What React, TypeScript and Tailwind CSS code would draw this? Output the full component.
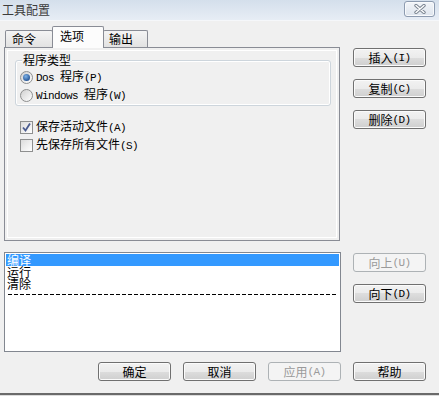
import React from "react";

const CJK = "font-['Noto_Sans_CJK_SC','Noto_Sans_CJK_JP',sans-serif]";

function Txt({ s }: { s: string }) {
  const runs: { a: boolean; t: string }[] = [];
  for (const ch of s) {
    const a = ch.charCodeAt(0) < 128;
    const last = runs[runs.length - 1];
    if (last && last.a === a) last.t += ch;
    else runs.push({ a, t: ch });
  }
  return (
    <>
      {runs.map((r, i) =>
        r.a ? (
          <span
            key={i}
            className="font-['Liberation_Mono',monospace] text-[11px] tracking-[-0.6px] whitespace-pre"
          >
            {r.t}
          </span>
        ) : (
          <span key={i}>{r.t}</span>
        )
      )}
    </>
  );
}

function Btn({ label, disabled }: { label: string; disabled?: boolean }) {
  return (
    <div
      className={
        "w-[73px] h-[19px] rounded-[3px] border flex items-center justify-center text-[12px] leading-[14px] " +
        (disabled
          ? "border-[#adb2b5] bg-[#f4f4f4] text-[#9a9a9a]"
          : "border-[#707070] bg-[linear-gradient(to_bottom,#f2f2f2_0%,#ebebeb_50%,#dddddd_50%,#cfcfcf_100%)] shadow-[inset_0_0_0_1px_#fbfbfb] text-black")
      }
    >
      <Txt s={label} />
    </div>
  );
}

function Radio({ checked, label }: { checked?: boolean; label: string }) {
  return (
    <div className="h-[18px] flex items-center gap-[3px]">
      <div className="w-[13px] h-[13px] rounded-full border border-[#8e8f8f] bg-[linear-gradient(135deg,#d0d0d0,#ffffff)] flex items-center justify-center">
        {checked && (
          <div className="w-[7px] h-[7px] rounded-full bg-[radial-gradient(circle_at_40%_35%,#7fb3e8,#2a5a9a_70%,#1c3f72)]" />
        )}
      </div>
      <span className="text-[12px] leading-[14px]">
        <Txt s={label} />
      </span>
    </div>
  );
}

function Check({ checked, label }: { checked?: boolean; label: string }) {
  return (
    <div className="h-[18px] flex items-center gap-[3px]">
      <div className="w-[13px] h-[13px] border border-[#8e8f8f] bg-[linear-gradient(135deg,#dcdcdc,#ffffff)] flex items-center justify-center">
        {checked && (
          <svg width="11" height="11" viewBox="0 0 11 11">
            <path d="M2 5.5 L4.5 8.5 L9 1.5" fill="none" stroke="#4a5b8f" strokeWidth="1.8" />
          </svg>
        )}
      </div>
      <span className="text-[12px] leading-[14px]">
        <Txt s={label} />
      </span>
    </div>
  );
}

export default function App() {
  return (
    <div className={"w-[439px] h-[396px] bg-[#f0f0f0] flex flex-col overflow-hidden text-black " + CJK}>
      {/* title bar */}
      <div className="h-[20px] bg-[linear-gradient(to_bottom,#d4dfeb,#e7edf5)] flex items-center justify-between pl-[2px] pr-[4px]">
        <span className="text-[12px] leading-[14px] text-[#3c3c3c]">工具配置</span>
        <div className="w-[31px] h-[16px] mt-[-2px] rounded-[3px] border border-[#8d9bb0] bg-[linear-gradient(to_bottom,#f2f5f9,#dde4ed)] shadow-[inset_0_0_0_1px_#f8fafc] flex items-center justify-center">
          <svg width="14" height="10" viewBox="0 0 14 10">
            <path d="M3 1.5 L11 8.5 M11 1.5 L3 8.5" stroke="#7b8592" strokeWidth="3.4" strokeLinecap="round" />
            <path d="M3 1.5 L11 8.5 M11 1.5 L3 8.5" stroke="#ffffff" strokeWidth="1.4" strokeLinecap="round" />
          </svg>
        </div>
      </div>
      <div className="h-[1px] bg-[#f5f7fa]" />

      {/* top section */}
      <div className="flex pl-[4px] pt-[5px]">
        <div className="w-[336px] flex flex-col">
          <div className="h-[21px] flex items-end pl-[1px]">
            <div className="w-[48px] h-[17px] border border-b-0 border-[#898c95] rounded-t-[2px] bg-[linear-gradient(to_bottom,#f4f4f4,#e2e2e2)] flex items-center pl-[6px] text-[12px] leading-[14px]">
              命令
            </div>
            <div className="relative z-10 ml-[-1px] mb-[-1px] w-[52px] h-[22px] border border-b-0 border-[#898c95] rounded-t-[2px] bg-[#fcfcfc] flex items-center pl-[7px] pb-[3px] text-[12px] leading-[14px]">
              选项
            </div>
            <div className="ml-[-1px] w-[45px] h-[17px] border border-b-0 border-[#898c95] rounded-t-[2px] bg-[linear-gradient(to_bottom,#f4f4f4,#e2e2e2)] flex items-center pl-[5px] text-[12px] leading-[14px]">
              输出
            </div>
          </div>
          <div className="h-[194px] border border-[#898c95] bg-[#f0f0f0] shadow-[inset_0_0_0_2px_#f0f0f0,inset_0_0_0_3px_#ffffff] flex flex-col">
            <div className="relative mt-[12px] ml-[10px] mr-[8px] h-[46px] border border-[#cdd5dc] rounded-[3px] shadow-[inset_0_0_0_1px_#ffffff] pt-[7px] pl-[4px]">
              <span className="absolute top-[-8px] left-[6px] bg-[#f0f0f0] px-[1px] text-[12px] leading-[14px]">
                程序类型
              </span>
              <Radio checked label="Dos 程序(P)" />
              <Radio label="Windows 程序(W)" />
            </div>
            <div className="mt-[12px] pl-[15px]">
              <Check checked label="保存活动文件(A)" />
              <Check label="先保存所有文件(S)" />
            </div>
          </div>
        </div>
        <div className="ml-[13px] mt-[22px] flex flex-col gap-[12px]">
          <Btn label="插入(I)" />
          <Btn label="复制(C)" />
          <Btn label="删除(D)" />
        </div>
      </div>

      {/* list section */}
      <div className="flex pl-[4px] mt-[11px]">
        <div className="w-[337px] h-[100px] border border-[#828790] bg-white p-[1px] text-[12px] leading-[12px]">
          <div className="h-[12px] bg-[#3399ff] text-white pl-[1px]">编译</div>
          <div className="h-[12px] pl-[1px]">运行</div>
          <div className="h-[12px] pl-[1px]">清除</div>
          <div className="mt-[4px] ml-[2px] mr-[1px] h-[1px] bg-[repeating-linear-gradient(to_right,#000_0,#000_4px,transparent_4px,transparent_6px)]" />
        </div>
        <div className="ml-[12px] mt-[1px] flex flex-col gap-[12px]">
          <Btn label="向上(U)" disabled />
          <Btn label="向下(D)" />
        </div>
      </div>

      {/* bottom buttons */}
      <div className="flex justify-end pr-[13px] gap-[12px] mt-[10px]">
        <Btn label="确定" />
        <Btn label="取消" />
        <Btn label="应用(A)" disabled />
        <Btn label="帮助" />
      </div>

      <div className="flex-1" />
      <div className="h-[2px] bg-[#6a6a6a]" />
      <div className="h-[1px] bg-[#dcdcdc]" />
    </div>
  );
}
